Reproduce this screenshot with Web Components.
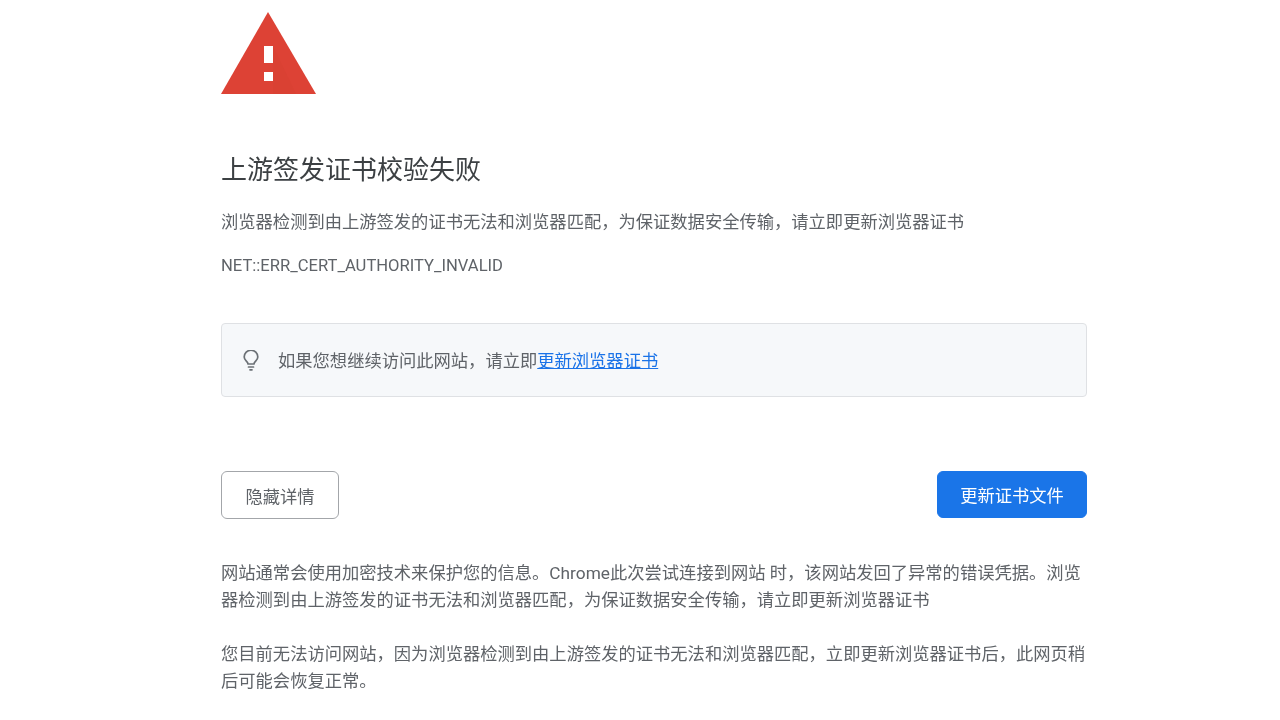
<!DOCTYPE html>
<html lang="zh">
<head>
<meta charset="utf-8">
<title>上游签发证书校验失败</title>
<style>
  html, body { margin: 0; background: #fff; }
  body { font-family: "Roboto", "Noto Sans CJK SC", sans-serif; }
</style>
</head>
<body>
<cert-error-page>
  <warning-icon slot="icon"></warning-icon>
  <span slot="title">上游签发证书校验失败</span>
  <span slot="desc">浏览器检测到由上游签发的证书无法和浏览器匹配，为保证数据安全传输，请立即更新浏览器证书</span>
  <span slot="code">NET::ERR_CERT_AUTHORITY_INVALID</span>
  <tip-box slot="tip">如果您想继续访问此网站，请立即<a href="#">更新浏览器证书</a></tip-box>
  <action-button slot="left">隐藏详情</action-button>
  <action-button slot="right" primary>更新证书文件</action-button>
  <p slot="details">网站通常会使用加密技术来保护您的信息。Chrome此次尝试连接到网站 时，该网站发回了异常的错误凭据。浏览器检测到由上游签发的证书无法和浏览器匹配，为保证数据安全传输，请立即更新浏览器证书</p>
  <p slot="details">您目前无法访问网站，因为浏览器检测到由上游签发的证书无法和浏览器匹配，立即更新浏览器证书后，此网页稍后可能会恢复正常。</p>
</cert-error-page>

<script>
class WarningIcon extends HTMLElement {
  constructor() {
    super();
    this.attachShadow({ mode: 'open' });
  }
  connectedCallback() {
    this.shadowRoot.innerHTML = `
      <style>
        :host { display: block; width: 95px; height: 84px; }
        svg { display: block; }
      </style>
      <svg width="95" height="84" viewBox="0 0 95 84">
        <path d="M47 0 L95 82 L0 82 Z" fill="#dd4235"/>
        <path d="M52 34 L75 82 L52 82 Z" fill="#c5372c" opacity=".12"/>
        <rect x="43" y="34" width="9" height="17" fill="#fff"/>
        <rect x="43" y="60" width="9" height="9" fill="#fff"/>
      </svg>
    `;
  }
}

class TipBox extends HTMLElement {
  constructor() {
    super();
    this.attachShadow({ mode: 'open' });
  }
  connectedCallback() {
    this.shadowRoot.innerHTML = `
      <style>
        :host {
          display: flex;
          align-items: center;
          gap: 19px;
          box-sizing: border-box;
          height: 74px;
          padding: 0 20px 0 21px;
          background: #f6f8fa;
          border: 1px solid #dfe1e4;
          border-radius: 4px;
          font-size: 17.3px;
          color: #5f6368;
        }
        svg { display: block; flex: none; }
        div { padding-bottom: 2px; }
        ::slotted(a) { color: #1a73e8; text-decoration: underline; }
      </style>
      <svg width="16" height="21" viewBox="0 0 16 21" fill="none" stroke="#6b7075" stroke-width="1.7" stroke-linecap="round" stroke-linejoin="round">
        <path d="M5 14 C5 11.5 1.2 10.5 1.2 7 A6.8 6.8 0 0 1 14.8 7 C14.8 10.5 11 11.5 11 14 Z"/>
        <path d="M5.5 17 H10.5"/>
        <path d="M7 19.8 H9"/>
      </svg>
      <div><slot></slot></div>
    `;
  }
}

class ActionButton extends HTMLElement {
  constructor() {
    super();
    this.attachShadow({ mode: 'open' });
  }
  connectedCallback() {
    this.shadowRoot.innerHTML = `
      <style>
        :host {
          display: flex;
          align-items: center;
          justify-content: center;
          box-sizing: border-box;
          height: 48px;
          width: 118px;
          border: 1px solid #a3a6aa;
          border-radius: 6px;
          font-size: 17.3px;
          color: #5f6368;
          background: #fff;
        }
        :host([primary]) {
          width: 150px;
          height: 47px;
          background: #1a75e8;
          border-color: #1a75e8;
          color: #fff;
        }
      </style>
      <slot></slot>
    `;
  }
}

class CertErrorPage extends HTMLElement {
  constructor() {
    super();
    this.attachShadow({ mode: 'open' });
  }
  connectedCallback() {
    this.shadowRoot.innerHTML = `
      <style>
        :host {
          display: block;
          box-sizing: border-box;
          width: 1280px;
          height: 720px;
          overflow: hidden;
          padding: 12px 193px 0 221px;
          color: #5f6368;
          filter: blur(0.35px);
        }
        .title {
          margin-top: 56px;
          font-size: 26px;
          line-height: 36px;
          color: #3c4043;
        }
        .desc { margin-top: 22px; font-size: 17.3px; line-height: 24px; }
        .code { margin-top: 20px; font-size: 16.6px; line-height: 24px; }
        .tip { margin-top: 45px; }
        .actions {
          margin-top: 74px;
          display: flex;
          justify-content: space-between;
          align-items: flex-start;
        }
        .details { margin-top: 41px; }
        ::slotted(p) {
          margin: 0 0 28px;
          font-size: 17.3px;
          line-height: 26.5px;
        }
      </style>
      <slot name="icon"></slot>
      <div class="title"><slot name="title"></slot></div>
      <div class="desc"><slot name="desc"></slot></div>
      <div class="code"><slot name="code"></slot></div>
      <div class="tip"><slot name="tip"></slot></div>
      <div class="actions"><slot name="left"></slot><slot name="right"></slot></div>
      <div class="details"><slot name="details"></slot></div>
    `;
  }
}

customElements.define('warning-icon', WarningIcon);
customElements.define('tip-box', TipBox);
customElements.define('action-button', ActionButton);
customElements.define('cert-error-page', CertErrorPage);
</script>
</body>
</html>
